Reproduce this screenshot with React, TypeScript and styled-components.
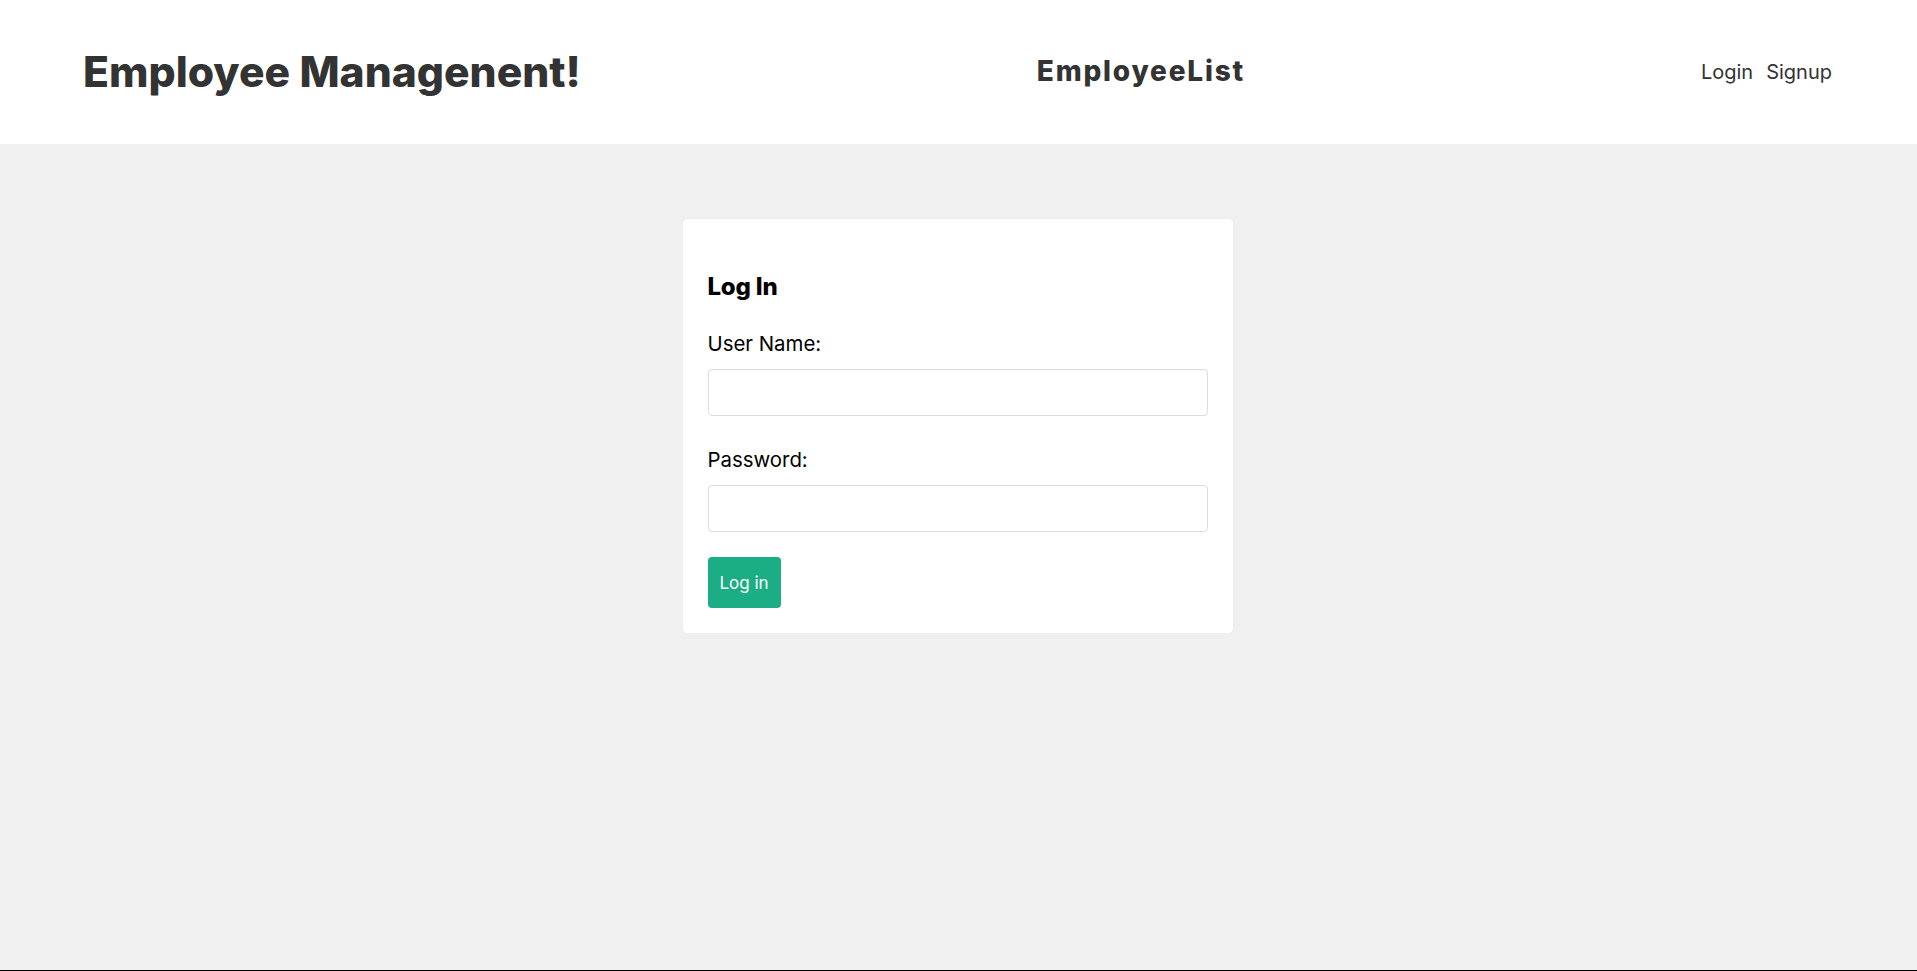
import React from "react";
import styled, { createGlobalStyle } from "styled-components";

const GlobalStyle = createGlobalStyle`
  html, body {
    margin: 0;
    padding: 0;
  }
  body {
    background: #f0f0f0;
    font-family: Inter, "Noto Sans", "DejaVu Sans", sans-serif;
    color: #000;
  }
  * { box-sizing: border-box; }
`;

const Page = styled.div`
  min-height: 100vh;
  display: flex;
  flex-direction: column;
`;

const Header = styled.header`
  height: 144px;
  background: #ffffff;
  display: flex;
  align-items: center;
  justify-content: space-between;
  padding: 0 85px 0 83px;
`;

const Brand = styled.h1`
  margin: 0;
  font-size: 42.6px;
  font-weight: 800;
  color: #333333;
  letter-spacing: 0;
  line-height: 1.2;
`;

const CenterLink = styled.a`
  font-size: 28px;
  font-weight: 800;
  color: #333333;
  text-decoration: none;
  letter-spacing: 1.8px;
  line-height: 1.2;
`;

const Nav = styled.nav`
  display: flex;
  align-items: center;
  gap: 13px;
`;

const NavLink = styled.a`
  font-size: 20px;
  font-weight: 400;
  color: #333333;
  text-decoration: none;
  line-height: 1.2;
`;

const Main = styled.main`
  flex: 1;
  display: flex;
  justify-content: center;
  align-items: flex-start;
  padding: 75px 2px 0 0;
`;

const Card = styled.form`
  width: 550px;
  background: #ffffff;
  border-radius: 5px;
  padding: 24px 25px 25px 25px;
  display: flex;
  flex-direction: column;
  align-items: stretch;
`;

const Title = styled.h3`
  margin: 28px 0 0 0;
  font-size: 24px;
  font-weight: 800;
  line-height: 31px;
  color: #000000;
  letter-spacing: -0.2px;
`;

const Field = styled.div<{ $first?: boolean }>`
  display: flex;
  flex-direction: column;
  margin-top: ${(p) => (p.$first ? "28px" : "30px")};
`;

const Label = styled.label`
  font-size: 20.4px;
  line-height: 28px;
  color: #000000;
  margin-bottom: 11px;
`;

const Input = styled.input`
  height: 47px;
  width: 100%;
  border: 1px solid #dcdcdc;
  border-radius: 4px;
  background: #ffffff;
  padding: 0 12px;
  font-size: 16px;
  font-family: inherit;
  outline: none;
`;

const Button = styled.button`
  align-self: flex-start;
  margin-top: 25px;
  width: 73px;
  height: 51px;
  border: none;
  border-radius: 4px;
  background: #1bae84;
  color: #ffffff;
  font-family: inherit;
  font-size: 17px;
  padding: 0;
  cursor: pointer;
`;

const Footer = styled.footer`
  border-top: 1px solid #000000;
`;

export default function App() {
  return (
    <>
      <GlobalStyle />
      <Page>
        <Header>
          <Brand>Employee Managenent!</Brand>
          <CenterLink href="#">EmployeeList</CenterLink>
          <Nav>
            <NavLink href="#">Login</NavLink>
            <NavLink href="#">Signup</NavLink>
          </Nav>
        </Header>
        <Main>
          <Card onSubmit={(e) => e.preventDefault()}>
            <Title>Log In</Title>
            <Field $first>
              <Label htmlFor="username">User Name:</Label>
              <Input id="username" type="text" />
            </Field>
            <Field>
              <Label htmlFor="password">Password:</Label>
              <Input id="password" type="password" />
            </Field>
            <Button type="submit">Log in</Button>
          </Card>
        </Main>
        <Footer />
      </Page>
    </>
  );
}
